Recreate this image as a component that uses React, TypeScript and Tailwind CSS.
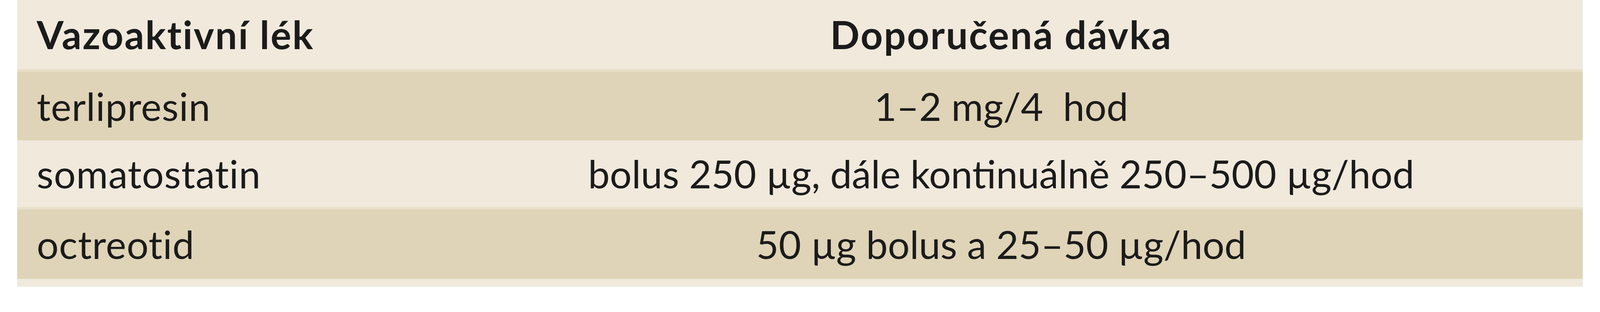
import React from "react";

const rows = [
  { drug: "terlipresin", dose: "1–2 mg/4\u00a0 hod" },
  { drug: "somatostatin", dose: "bolus 250 µg, dále kontinuálně 250–500 µg/hod" },
  { drug: "octreotid", dose: "50 µg bolus a 25–50 µg/hod" },
];

export default function App() {
  return (
    <div className="w-full h-screen bg-white overflow-hidden px-[44px]" style={{ fontFamily: "Lato, 'Open Sans', sans-serif" }}>
      <div className="w-full flex flex-col text-[99px] leading-[1.2] text-[#1b1b1b]">
        <div className="flex h-[184px] bg-[#f0e9dc] border-b-[7px] border-[#e8dfc8] font-bold tracking-[0.03em]">
          <div className="w-[1030px] shrink-0 pl-[50px] flex items-center">Vazoaktivní lék</div>
          <div className="flex-1 min-w-0 flex items-center justify-center">Doporučená dávka</div>
        </div>
        <div className="flex h-[176px] bg-[#dfd4b7]">
          <div className="w-[1030px] shrink-0 pl-[50px] flex items-center tracking-[0.01em]">{rows[0].drug}</div>
          <div className="flex-1 min-w-0 flex items-center justify-center whitespace-pre">{rows[0].dose}</div>
        </div>
        <div className="flex h-[177px] bg-[#f0e9dc] border-b-[6px] border-[#e8dfc8]">
          <div className="w-[1030px] shrink-0 pl-[50px] flex items-center tracking-[0.01em]">{rows[1].drug}</div>
          <div className="flex-1 min-w-0 flex items-center justify-center">{rows[1].dose}</div>
        </div>
        <div className="flex h-[178px] bg-[#dfd4b7]">
          <div className="w-[1030px] shrink-0 pl-[50px] flex items-center tracking-[0.01em]">{rows[2].drug}</div>
          <div className="flex-1 min-w-0 flex items-center justify-center">{rows[2].dose}</div>
        </div>
        <div className="h-[20px] bg-[#f0e9dc]"></div>
      </div>
    </div>
  );
}
